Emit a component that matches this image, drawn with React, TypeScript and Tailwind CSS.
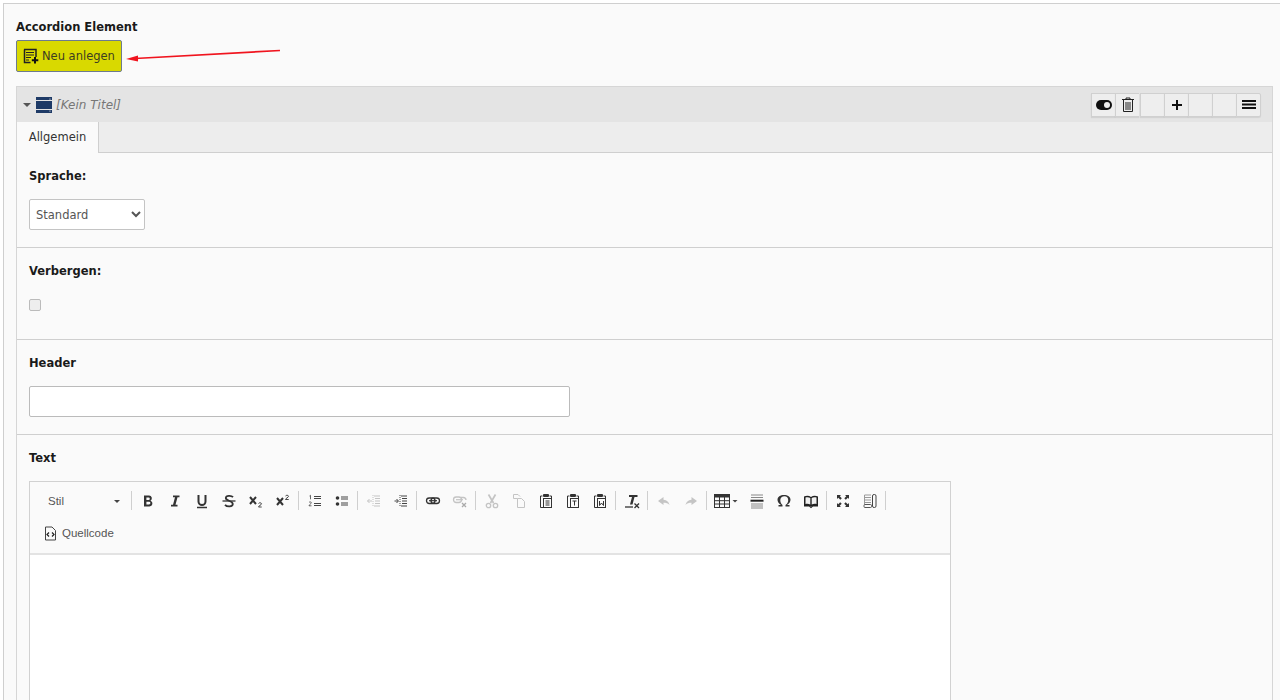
const dark = "#333";
const mute = "#c4c4c4";

const Sep = () => <span className="mx-[2px] h-[19px] w-px shrink-0 bg-[#cfcfcf]" />;

const Btn = ({ children, wide }: { children: React.ReactNode; wide?: boolean }) => (
  <span className={`flex h-[24px] shrink-0 items-center justify-center ${wide ? "w-[34px]" : "w-[27px]"}`}>
    <svg width={wide ? 27 : 16} height="16" viewBox={wide ? "0 0 27 16" : "0 0 16 16"}>
      {children}
    </svg>
  </span>
);

const Clipboard = ({ children }: { children?: React.ReactNode }) => (
  <>
    <path d="M4.500 3H2.500v11.500H5M11.500 3h2v2" fill="none" stroke={dark} strokeWidth="1" />
    <rect x="5" y="1" width="6" height="3" rx="1" fill={dark} />
    <rect x="5.500" y="5.500" width="8" height="9" fill="#fafafa" stroke={dark} />
    {children}
  </>
);

function Toolbar() {
  return (
    <div className="flex h-[73px] flex-col border-b-2 border-[#e3e3e3] bg-[#fafafa]">
      <div className="flex h-[33px] items-end pb-[2px]">
        <span className="flex h-[24px] w-[100px] shrink-0 items-center pl-[18px] pr-[10px] font-['Liberation_Sans',sans-serif] text-[11.500px] text-[#555]">
          <span className="pt-[1px]">Stil</span>
          <span className="ml-auto mt-[1px] h-0 w-0 border-x-[3px] border-t-[3px] border-x-transparent border-t-[#444]" />
        </span>
        <span className="mb-[3px] mr-[2px] ml-[1px] h-[19px] w-px shrink-0 bg-[#cfcfcf]" />
        <span className="flex items-center">
          <Btn><path d="M4 2.500h5a2.800 2.800 0 0 1 1.500 5.200A3 3 0 0 1 9.500 13.500H4zM6.400 4.500v2.400h2.200a1.200 1.200 0 0 0 0-2.400zM6.400 8.700v2.800h2.600a1.400 1.400 0 0 0 0-2.800z" fill="#333" fillRule="evenodd" /></Btn>
          <Btn><path d="M6 2.500h6.500v1.700h-2l-2 7.600h2v1.700H4v-1.700h2l2-7.600H6z" fill="#333" /></Btn>
          <Btn>
            <path d="M4.500 2v6.500a3.500 3.500 0 0 0 7 0V2" fill="none" stroke="#333" strokeWidth="2" />
            <path d="M3 14.500h10" stroke="#333" strokeWidth="1.500" />
          </Btn>
          <Btn>
            <path d="M12 4.200C10.500 2.400 5 2.200 4.800 5c-.2 3 7 2.500 7 6 0 3-5.800 3-7.800 .8" fill="none" stroke="#333" strokeWidth="1.800" />
            <path d="M1.500 8h13" stroke="#333" strokeWidth="1.300" />
          </Btn>
          <Btn>
            <path d="M2 4l6 7M8 4l-6 7" stroke="#333" strokeWidth="2" />
            <path d="M10.500 10.500c.5-1 3-1 3 .3 0 1.200-3 2-3 3.200h3.200" fill="none" stroke="#333" strokeWidth=".9" />
          </Btn>
          <Btn>
            <path d="M2 5l6 7M8 5l-6 7" stroke="#333" strokeWidth="2" />
            <path d="M10.500 3c.5-1 3-1 3 .3 0 1.200-3 2-3 3.200h3.200" fill="none" stroke="#333" strokeWidth=".9" />
          </Btn>
        </span>
        <span className="mb-[3px] flex"><Sep /></span>
        <span className="flex items-center">
          <Btn>
            <path d="M7 3.500h7M7 5.500h7M7 10.500h7M7 12.500h7" stroke="#444" strokeWidth="1" />
            <path d="M2.500 3l1-.7v4M2 9.500c.4-.8 2.400-.8 2.400.3 0 1-2.400 1.700-2.400 3h2.500" fill="none" stroke="#444" strokeWidth=".8" />
          </Btn>
          <Btn>
            <circle cx="3.500" cy="5" r="1.800" fill="#333" />
            <circle cx="3.500" cy="11" r="1.800" fill="#333" />
            <path d="M7 4h7M7 6h7M7 10h7M7 12h7" stroke="#444" strokeWidth="1" />
          </Btn>
        </span>
        <span className="mb-[3px] flex"><Sep /></span>
        <span className="flex items-center">
          <Btn>
            <path d="M8 3h6M9 5.500h5M9 8h5M9 10.500h5M8 13h6" stroke={mute} strokeWidth="1" />
            <path d="M7 2v12" stroke={mute} strokeWidth="1" strokeDasharray="1 1" />
            <path d="M6 8H1.500M3.500 6l-2 2 2 2" fill="none" stroke={mute} strokeWidth="1" />
          </Btn>
          <Btn>
            <path d="M8 3h6M9 5.500h5M9 8h5M9 10.500h5M8 13h6" stroke="#444" strokeWidth="1" />
            <path d="M7 2v12" stroke="#444" strokeWidth="1" strokeDasharray="1 1" />
            <path d="M1.500 8h3.500M3.500 6l2 2-2 2" fill="none" stroke="#444" strokeWidth="1" />
          </Btn>
        </span>
        <span className="mb-[3px] flex"><Sep /></span>
        <span className="flex items-center">
          <Btn>
            <rect x="1.500" y="5" width="8.500" height="5.500" rx="2.700" fill="none" stroke="#333" strokeWidth="1.300" />
            <rect x="6" y="5" width="8.500" height="5.500" rx="2.700" fill="none" stroke="#333" strokeWidth="1.300" />
            <path d="M4 7.700h8" stroke="#333" strokeWidth="1.200" />
          </Btn>
          <Btn>
            <rect x="1.500" y="4" width="8" height="5.500" rx="2.700" fill="none" stroke={mute} strokeWidth="1.300" />
            <path d="M9 4.500h2.500a2.700 2.700 0 0 1 2.500 2.500" fill="none" stroke={mute} strokeWidth="1.300" />
            <path d="M4 6.700h7" stroke={mute} strokeWidth="1.200" />
            <path d="M10 10l4 4M14 10l-4 4" stroke="#aaa" strokeWidth="1.300" />
          </Btn>
        </span>
        <span className="mb-[3px] flex"><Sep /></span>
        <span className="flex items-center">
          <Btn>
            <path d="M4.500 1.500 9.500 10M11.500 1.500 6.500 10" stroke={mute} strokeWidth="1.700" />
            <circle cx="4.500" cy="12.500" r="2.200" fill="none" stroke={mute} strokeWidth="1.300" />
            <circle cx="11.500" cy="12.500" r="2.200" fill="none" stroke={mute} strokeWidth="1.300" />
          </Btn>
          <Btn>
            <path d="M6.500 5.500h-4V1.500h4.500l2 2" fill="none" stroke={mute} />
            <path d="M6.500 5.500h4l3 3v6h-7z" fill="#fafafa" stroke={mute} />
          </Btn>
          <Btn><Clipboard><path d="M7.500 8h4M7.500 10h4M7.500 12h4" stroke={dark} strokeWidth="1" /></Clipboard></Btn>
          <Btn><Clipboard><path d="M7.500 8h4M9.500 8v4.500" stroke={dark} strokeWidth="1" /></Clipboard></Btn>
          <Btn><Clipboard><path d="M7.500 8v4.500l2-2.500 2 2.500V8" fill="none" stroke={dark} strokeWidth="1" /></Clipboard></Btn>
        </span>
        <span className="mb-[3px] flex"><Sep /></span>
        <span className="flex items-center">
          <Btn>
            <path d="M5 2h8.500v2h-3l-2 7.500H6L8 4H5z" fill="#333" />
            <path d="M1 14h8" stroke="#333" strokeWidth="1.300" />
            <path d="M10.500 10.500l4.500 4.500M15 10.500 10.500 15" stroke="#333" strokeWidth="1.300" />
          </Btn>
        </span>
        <span className="mb-[3px] flex"><Sep /></span>
        <span className="flex items-center">
          <Btn><path d="M7.500 4 2 8l5.500 4V9.800c2.500 0 4.500.4 6 2.200-.5-3-2.500-5-6-5.300z" fill={mute} /></Btn>
          <Btn><path d="M8.500 4 14 8l-5.500 4V9.800c-2.500 0-4.500.4-6 2.200.5-3 2.500-5 6-5.300z" fill={mute} /></Btn>
        </span>
        <span className="mb-[3px] flex"><Sep /></span>
        <span className="flex items-center">
          <Btn wide>
            <rect x="1.500" y="1.500" width="15" height="13" fill="#fafafa" stroke="#333" />
            <rect x="1" y="1" width="16" height="3.500" fill="#333" />
            <path d="M6.500 4v10M11.500 4v10M2 7.700h14M2 11h14" stroke="#333" strokeWidth="1" />
            <path d="M19.500 7h5l-2.500 2.500z" fill="#444" />
          </Btn>
          <Btn>
            <path d="M2 2h12" stroke="#888" strokeWidth="1" />
            <path d="M2 4.500h12" stroke="#888" strokeWidth="1" />
            <path d="M1.500 7.700h13" stroke="#222" strokeWidth="2" />
            <path d="M2 11h12M2 13h12M2 15h12" stroke="#888" strokeWidth="1" />
          </Btn>
          <Btn><path d="M6.500 13.500H2.500V12H5C2.500 10.500 1.500 8.500 1.500 6.800 1.500 3.800 4.300 2 8 2s6.500 1.800 6.500 4.800c0 1.700-1 3.700-3.500 5.200h2.500v1.500h-4V12c2-1.200 2.700-3 2.700-5 0-2.300-1.400-3.700-3.700-3.700S4.300 4.700 4.300 7c0 2 .7 3.800 2.200 5z" fill="#333" /></Btn>
          <Btn>
            <path d="M1 3.500c2.500-1 5-1 7 .5 2-1.500 4.500-1.500 7-.5v9.500H1z" fill="#222" />
            <path d="M2.500 4.500c1.800-.5 3.500-.4 4.800.5v6.500c-1.300-.7-3-.8-4.800-.5zM13.500 4.500c-1.800-.5-3.500-.4-4.800.5v6.500c1.300-.7 3-.8 4.800-.5z" fill="#f0f0f0" />
            <path d="M1 13h5.500l1.500 1.500 1.500-1.500H15" fill="none" stroke="#222" strokeWidth="1.200" />
          </Btn>
        </span>
        <span className="mb-[3px] flex"><Sep /></span>
        <span className="flex items-center">
          <Btn>
            <path d="M2 2h4L4.800 3.200l2 2-1.500 1.500-2-2L2 6zM14 2v4l-1.200-1.200-2 2-1.500-1.500 2-2L10 2zM2 14v-4l1.200 1.200 2-2 1.500 1.500-2 2L6 14zM14 14h-4l1.200-1.200-2-2 1.500-1.500 2 2L14 10z" fill="#333" />
          </Btn>
          <Btn>
            <path d="M9 2H2.500v9.500M3 4.500h6M3 7h6M3 9.500h6" fill="none" stroke="#999" strokeWidth="1" />
            <rect x="2" y="11.500" width="7.500" height="3" rx="1" fill="none" stroke="#555" />
            <rect x="10.500" y="1.500" width="3.500" height="13" rx="1.500" fill="none" stroke="#444" />
          </Btn>
        </span>
        <span className="mb-[3px] flex"><Sep /></span>
      </div>
      <div className="mt-[6px] flex h-[24px] items-center pl-[14px] font-['Liberation_Sans',sans-serif] text-[11.500px] text-[#555]">
        <svg width="13" height="15" viewBox="0 0 13 15" className="mr-[5px]">
          <path d="M1.500 1h6.500l3.500 3.500v9.500h-10z" fill="#fafafa" stroke="#444" />
          <path d="M5 6.500 3 8.500l2 2M8 6.500l2 2-2 2" fill="none" stroke="#222" strokeWidth="1.200" />
        </svg>
        <span className="pt-[1px]">Quellcode</span>
      </div>
    </div>
  );
}

const HeadBtn = ({ children, last, gap }: { children?: React.ReactNode; last?: boolean; gap?: boolean }) => (
  <span className={`flex h-[24px] items-center justify-center border-y border-l border-[#d0d0d0] bg-[#eeeeee] shadow-[0_1px_1px_rgba(0,0,0,0.08)] ${last ? "w-[25px] rounded-r-[2px] border-r" : "w-[24px]"} ${gap ? "ml-[1px]" : ""}`}>
    {children}
  </span>
);

export default function App() {
  return (
    <div className="relative h-[700px] overflow-hidden bg-white pl-[3px] pt-[3px] font-['DejaVu_Sans',sans-serif] text-[11.500px] text-[#1a1a1a]">
      <div className="h-full border-l border-t border-[#cfcfcf] bg-[#fafafa] pl-[12px] pr-[7px]">
        <h2 className="pt-[15px] text-[11.500px] font-bold leading-[17px] text-[#1a1a1a]">Accordion Element</h2>

        <button className="mt-[4px] flex h-[32px] w-[106px] items-center rounded-[2px] border border-[#6d7b8f] bg-[#d9d900] pl-[6px] text-[11.500px] text-[#3d3d20]">
          <svg width="16" height="16" viewBox="0 0 16 16" className="mr-[3px]">
            <path d="M1 1.500h12v7.500M7.500 14.500H1.500V1.500" fill="none" stroke="#222" strokeWidth="1.500" />
            <path d="M3 4.500h8M3 7h8M3 9.500h5M3 12h3" stroke="#222" strokeWidth="1" />
            <path d="M12 9v6.500M8.800 12.200h6.500" stroke="#111" strokeWidth="2" />
          </svg>
          <span className="pt-[2px]">Neu anlegen</span>
        </button>

        <div className="mt-[14px] border border-[#d6d6d6]">
          <div className="flex h-[35px] items-center bg-[#e4e4e4] pl-[6px] pr-[11px]">
            <span className="mr-[5px] mt-[1px] h-0 w-0 border-x-[4px] border-t-[4px] border-x-transparent border-t-[#555]" />
            <svg width="16" height="16" viewBox="0 0 16 16" className="mr-[4px]">
              <rect x="0" y="0" width="16" height="16" fill="#1e3a66" />
              <path d="M0 3.500h16M0 12.500h16" stroke="#e4e4e4" strokeWidth="1" />
              <circle cx="14" cy="2" r=".6" fill="#fff" />
              <circle cx="14" cy="14" r=".6" fill="#fff" />
            </svg>
            <span className="pt-[1px] text-[12px] italic text-[#777]">[Kein Titel]</span>
            <div className="ml-auto flex">
              <HeadBtn>
                <svg width="16" height="10" viewBox="0 0 16 10">
                  <rect x="0" y="0" width="16" height="10" rx="5" fill="#111" />
                  <circle cx="11" cy="5" r="3" fill="#eee" />
                </svg>
              </HeadBtn>
              <HeadBtn>
                <svg width="12" height="15" viewBox="0 0 12 15">
                  <path d="M0 2.500h12M4 2.500V1h4v1.500" fill="none" stroke="#222" />
                  <path d="M1.500 3v11.500h9V3M4 5v8M6 5v8M8 5v8" fill="none" stroke="#222" />
                </svg>
              </HeadBtn>
              <HeadBtn gap />
              <HeadBtn>
                <svg width="10" height="10" viewBox="0 0 10 10">
                  <path d="M5 0v10M0 5h10" stroke="#111" strokeWidth="2" />
                </svg>
              </HeadBtn>
              <HeadBtn />
              <HeadBtn />
              <HeadBtn last>
                <svg width="14" height="9" viewBox="0 0 14 9">
                  <path d="M0 1h14M0 4.500h14M0 8h14" stroke="#111" strokeWidth="1.800" />
                </svg>
              </HeadBtn>
            </div>
          </div>

          <div className="flex h-[31px] items-end border-b border-[#cfcfcf] bg-[#ededed]">
            <span className="-mb-px flex h-[31px] w-[82px] items-center justify-center border-r border-[#cfcfcf] bg-[#fafafa] pt-[1px] text-[11.500px] text-[#333]">
              Allgemein
            </span>
          </div>

          <section className="h-[95px] border-b border-[#cfcfcf] px-[12px] pt-[16px]">
            <label className="block text-[11.500px] font-bold leading-[15px]">Sprache:</label>
            <select className="mt-[15px] h-[31px] w-[116px] rounded-[2px] border border-[#c4c4c4] bg-white pl-[2px] text-[11.500px] text-[#555]">
              <option>Standard</option>
            </select>
          </section>

          <section className="h-[92px] border-b border-[#cfcfcf] px-[12px] pt-[16px]">
            <label className="block text-[11.500px] font-bold leading-[15px]">Verbergen:</label>
            <input type="checkbox" className="mt-[20px] block h-[12px] w-[12px] appearance-none rounded-[2px] border border-[#bbbbbb] bg-[#eeeeee]" />
          </section>

          <section className="h-[95px] border-b border-[#cfcfcf] px-[12px] pt-[16px]">
            <label className="block text-[11.500px] font-bold leading-[15px]">Header</label>
            <input type="text" className="mt-[15px] block h-[31px] w-[541px] rounded-[2px] border border-[#bbbbbb] bg-white" />
          </section>

          <section className="px-[12px] pt-[16px]">
            <label className="block text-[11.500px] font-bold leading-[15px]">Text</label>
            <div className="mt-[15px] w-[922px] border border-b-0 border-[#d1d1d1]">
              <Toolbar />
              <div className="h-[200px] bg-white" />
            </div>
          </section>
        </div>
      </div>

      <svg width="160" height="16" viewBox="0 0 160 16" className="absolute left-[125px] top-[49px]">
        <path d="M155 1.500 10 9.500" stroke="#f0141e" strokeWidth="1.700" />
        <path d="M1 10l12-3.500v6z" fill="#f0141e" />
      </svg>
    </div>
  );
}
